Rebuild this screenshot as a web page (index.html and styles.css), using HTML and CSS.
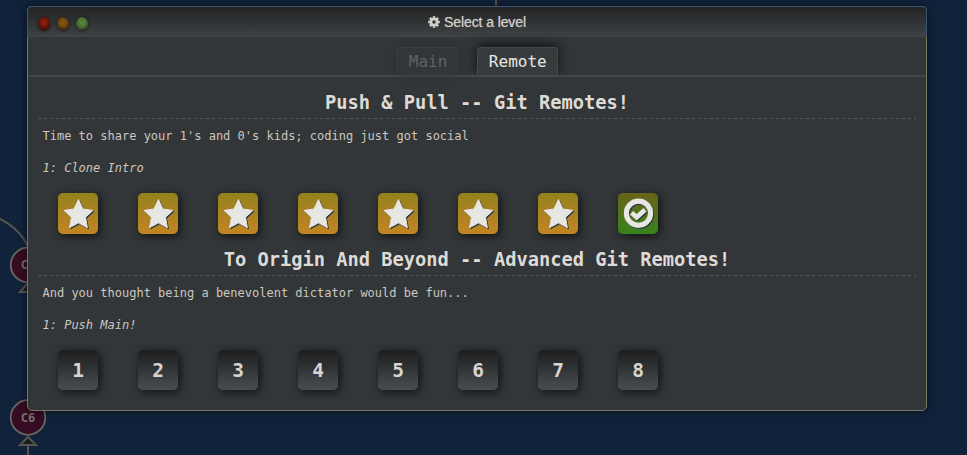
FILE: index.html
```html
<!DOCTYPE html>
<html lang="en">
<head>
<meta charset="utf-8">
<title>Select a level</title>
<link rel="stylesheet" href="styles.css">
</head>
<body>
<svg class="tree" width="967" height="455" viewBox="0 0 967 455" aria-hidden="true">
  <path class="edge" d="M496 0V8M-4 217Q20 228 28 247M28 455V440"/>
  <path class="arrow" d="M28 283L20 292H36Z"/>
  <path class="arrow" d="M28 437L20 445H36Z"/>
  <circle class="commit" cx="28" cy="265" r="17.3"/>
  <circle class="commit" cx="28" cy="417.500" r="17.3"/>
  <text class="commit-label" x="28" y="269">C5</text>
  <text class="commit-label" x="28" y="422">C6</text>
</svg>
<svg class="defs" width="0" height="0" aria-hidden="true">
  <symbol id="star" viewBox="0 0 40 41"><path stroke="#e8e6e3" stroke-width="1" stroke-linejoin="round" d="M20.500 6.500L24.900 16L35 17.400L27.500 24.400L29.400 34.700L20.500 29.800L11.600 34.700L13.500 24.400L6 17.400L16.100 16Z"/></symbol>
  <symbol id="check" viewBox="0 0 40 41"><circle cx="20.500" cy="20.200" r="12.100" fill="none" stroke="#e8e6e3" stroke-width="5.200"/><path d="M13.600 19.700L18.700 24.300L27 16.700" fill="none" stroke="#e8e6e3" stroke-width="4.800"/></symbol>
</svg>
<main class="window">
  <header class="titlebar">
    <div class="lights"><i class="light red"></i><i class="light amber"></i><i class="light green"></i></div>
    <div class="title">
      <svg width="12" height="12" viewBox="-6 -6 12 12"><g fill="#d3cfc9"><circle r="4.300"/><g id="teeth"><rect x="-1.300" y="-5.800" width="2.600" height="11.600"/><rect x="-5.800" y="-1.300" width="11.600" height="2.600"/></g><use href="#teeth" transform="rotate(45)"/></g><circle r="1.700" fill="#2e3031"/></svg>
      <span>Select a level</span>
    </div>
  </header>
  <nav class="tabs"><div class="tab">Main</div><div class="tab active">Remote</div></nav>
  <section class="series">
    <h3>Push &amp; Pull -- Git Remotes!</h3>
    <p>Time to share your 1's and 0's kids; coding just got social</p>
    <p class="level-name">1: Clone Intro</p>
    <div class="levels">
      <div class="level solved best"><svg><use href="#star"/></svg></div>
      <div class="level solved best"><svg><use href="#star"/></svg></div>
      <div class="level solved best"><svg><use href="#star"/></svg></div>
      <div class="level solved best"><svg><use href="#star"/></svg></div>
      <div class="level solved best"><svg><use href="#star"/></svg></div>
      <div class="level solved best"><svg><use href="#star"/></svg></div>
      <div class="level solved best"><svg><use href="#star"/></svg></div>
      <div class="level solved"><svg><use href="#check"/></svg></div>
    </div>
  </section>
  <section class="series">
    <h3>To Origin And Beyond -- Advanced Git Remotes!</h3>
    <p>And you thought being a benevolent dictator would be fun...</p>
    <p class="level-name">1: Push Main!</p>
    <div class="levels">
      <div class="level">1</div><div class="level">2</div><div class="level">3</div><div class="level">4</div>
      <div class="level">5</div><div class="level">6</div><div class="level">7</div><div class="level">8</div>
    </div>
  </section>
</main>
</body>
</html>
```
FILE: styles.css
```css
* { box-sizing: border-box; }
body {
  margin: 0;
  height: 455px;
  overflow: hidden;
  background: #11233b;
  color: #d3cfc9;
  font-family: "DejaVu Sans Mono", monospace;
}
.tree { position: absolute; left: 0; top: 0; }
.defs { position: absolute; }
.edge { fill: none; stroke: #565552; stroke-width: 2; }
.arrow { fill: #181a1b; stroke: #565552; stroke-width: 2; }
.commit { fill: #360d22; stroke: #6b6763; stroke-width: 1.8; }
.commit-label { fill: #797571; font-size: 12px; font-weight: bold; text-anchor: middle; }
.window {
  position: relative;
  width: 900px;
  height: 405px;
  margin: 6px 0 0 27px;
  border: 1px solid #7b7566;
  border-radius: 5px;
  background: #333638;
  box-shadow: 0 0 10px rgba(0, 0, 0, .6);
}
.titlebar {
  display: flex;
  align-items: center;
  justify-content: center;
  height: 31px;
  margin: -1px -1px 0;
  border: 1px solid #405573;
  border-bottom: 0;
  border-radius: 5px 5px 0 0;
  background: linear-gradient(#222324, #3e4345);
  color: #d3cfc9;
  font: 14px "Liberation Sans", sans-serif;
  letter-spacing: -.1px;
}
.title { display: flex; align-items: center; gap: 4px; text-shadow: 0 0 1px #999; }
.lights { position: absolute; left: 10px; top: 10px; display: flex; gap: 7px; }
.light { width: 12px; height: 14px; border-radius: 50%; box-shadow: 0 0 3px #151617; }
.red { background: radial-gradient(circle at 50% 40%, #8b1f0f 15%, #691409 45%, #1d1413 85%); }
.amber { background: radial-gradient(circle at 50% 40%, #83540f 15%, #67420f 45%, #1d1a14 85%); }
.green { background: radial-gradient(circle at 50% 40%, #58823a 15%, #486d30 45%, #192015 85%); }
.tabs {
  display: flex;
  justify-content: center;
  align-items: flex-end;
  gap: 19px;
  height: 40px;
  padding-left: 1px;
  border-bottom: 2px solid #43474a;
}
.tab {
  height: 28px;
  padding: 0 10px 0 11px;
  border: 1px solid #3a3e40;
  border-bottom: 0;
  border-radius: 4px 4px 0 0;
  background: #333638;
  box-shadow: 0 0 10px rgba(0, 0, 0, .15);
  color: #606263;
  font-size: 16px;
  line-height: 27px;
}
.tab.active {
  padding: 0 10.5px;
  border-color: #45494b;
  background: #373b3d;
  box-shadow: 0 -2px 12px rgba(0, 0, 0, .75);
  clip-path: inset(-14px -14px 0);
  color: #e8e6e3;
}
.series { height: 157px; padding: 15px 10px 0; }
.series h3 {
  height: 27px;
  margin: 0;
  background: repeating-linear-gradient(90deg, #55595b 0 3px, transparent 3px 6px) 0 100% / 100% 1px no-repeat;
  color: #dedbd7;
  font-size: 18.72px;
  line-height: 22px;
  text-align: center;
}
.series p { height: 32px; margin: 0; padding: 9px 4px 0 4.5px; font-size: 12px; line-height: 16px; color: #cbc6be; }
.series .level-name { font-style: italic; }
.levels { display: flex; gap: 40px; margin: 10px 0 0 20px; }
.level {
  width: 40px;
  height: 40px;
  border-radius: 5px;
  background: linear-gradient(#1c1d1e, #484e50);
  box-shadow: 2px 2px 10px rgba(0, 0, 0, .7);
  color: #d8d4cf;
  font-size: 19.5px;
  font-weight: bold;
  line-height: 41px;
  text-align: center;
}
.level.solved { height: 41px; background: linear-gradient(#686318, #37821e); }
.level.best { background: linear-gradient(#92821d, #c28422); }
.level svg { display: block; width: 40px; height: 41px; fill: #e8e6e3; filter: drop-shadow(1px 1.500px .4px #25343a); }
```
